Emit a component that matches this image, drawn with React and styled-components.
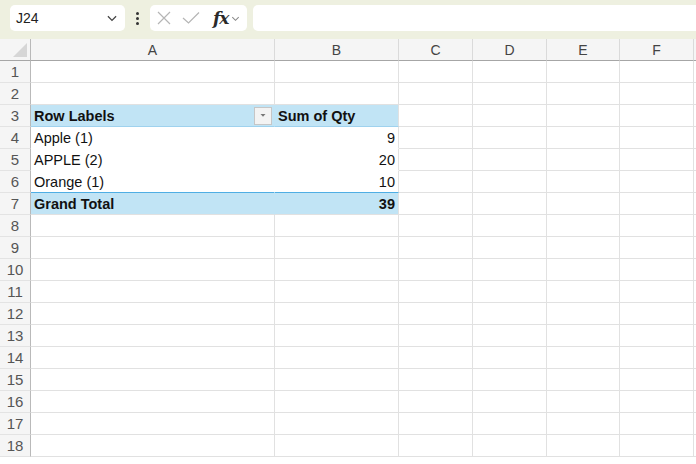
import React from "react";
import styled, { createGlobalStyle } from "styled-components";

const Global = createGlobalStyle`
  html, body { margin: 0; padding: 0; background: #ffffff; }
  body { font-family: "Liberation Sans", Arial, sans-serif; overflow: hidden; }
`;

const Page = styled.div`
  width: 696px;
  height: 464px;
  display: flex;
  flex-direction: column;
  overflow: hidden;
`;

const Toolbar = styled.div`
  height: 39px;
  flex: none;
  box-sizing: border-box;
  background: #eef0e0;
  display: flex;
  align-items: flex-start;
  padding: 5px 0 0 10px;
`;

const NameBox = styled.div`
  width: 115px;
  height: 26px;
  box-sizing: border-box;
  background: #ffffff;
  border-radius: 5px;
  display: flex;
  align-items: center;
  justify-content: space-between;
  padding: 0 6px 0 6px;
  font-size: 14px;
  color: #222;
`;

const Dots = styled.div`
  width: 25px;
  height: 26px;
  display: flex;
  flex-direction: column;
  align-items: center;
  justify-content: center;
  gap: 2px;
  span {
    width: 3px;
    height: 3px;
    background: #333;
    border-radius: 50%;
  }
`;

const FxBox = styled.div`
  width: 97px;
  height: 26px;
  box-sizing: border-box;
  background: #ffffff;
  border-radius: 5px;
  display: flex;
  align-items: center;
  padding: 0 0 0 5px;
  gap: 8px;
`;

const FxGroup = styled.span`
  display: flex;
  align-items: center;
  gap: 2px;
  margin-left: 4px;
`;

const Fx = styled.span`
  font-family: "DejaVu Serif", "Liberation Serif", serif;
  font-style: italic;
  font-size: 17px;
  font-weight: 600;
  color: #2a2a2a;
  letter-spacing: -1px;
`;

const FormulaInput = styled.div`
  flex: 1;
  height: 26px;
  margin-left: 6px;
  background: #ffffff;
  border-radius: 5px 0 0 5px;
`;

const Grid = styled.div`
  display: grid;
  grid-template-columns: 31px 244px 124px 74px 74px 73px 74px 1fr;
  grid-auto-rows: 22px;
`;

const Corner = styled.div`
  background: #f5f5f5;
  border-right: 1px solid #b9b9b9;
  border-bottom: 1px solid #a6a6a6;
  display: flex;
  align-items: flex-end;
  justify-content: flex-end;
  padding: 0 3px 3px 0;
  box-sizing: border-box;
`;

const ColHeader = styled.div`
  background: #f5f5f5;
  border-right: 1px solid #dadada;
  border-bottom: 1px solid #a6a6a6;
  box-sizing: border-box;
  display: flex;
  align-items: center;
  justify-content: center;
  font-size: 14px;
  color: #444;
`;

const RowHeader = styled.div`
  background: #f5f5f5;
  border-right: 1px solid #b9b9b9;
  border-bottom: 1px solid #e3e3e3;
  box-sizing: border-box;
  display: flex;
  align-items: center;
  justify-content: center;
  font-size: 15px;
  color: #555;
`;

const Cell = styled.div`
  box-sizing: border-box;
  background: ${(p) => p.$fill || "#ffffff"};
  border-right: 1px solid ${(p) => p.$rightColor || "#e1e1e1"};
  border-bottom: 1px solid ${(p) => p.$bottomColor || "#e1e1e1"};
  display: flex;
  align-items: center;
  justify-content: ${(p) => (p.$right ? "flex-end" : "space-between")};
  padding: 0 3px;
  font-size: 14.5px;
  font-weight: ${(p) => (p.$bold ? 700 : 400)};
  color: #111;
  white-space: nowrap;
`;

const FilterButton = styled.div`
  width: 18px;
  height: 18px;
  box-sizing: border-box;
  background: #f3f3f3;
  border: 1px solid #c6c6c6;
  display: flex;
  align-items: center;
  justify-content: center;
  margin-right: -1px;
`;

const cols = ["A", "B", "C", "D", "E", "F"];
const BLUE = "#c1e4f5";

const pivot = {
  3: { a: "Row Labels", b: "Sum of Qty", type: "head" },
  4: { a: "Apple (1)", b: "9", type: "body" },
  5: { a: "APPLE (2)", b: "20", type: "body" },
  6: { a: "Orange (1)", b: "10", type: "last" },
  7: { a: "Grand Total", b: "39", type: "total" },
};

function Chevron({ size = 12, color = "#444" }) {
  return (
    <svg width={size} height={size} viewBox="0 0 12 12">
      <path d="M2.5 4.5 L6 8 L9.5 4.5" fill="none" stroke={color} strokeWidth="1.1" />
    </svg>
  );
}

function PivotCells({ row }) {
  const p = pivot[row];
  const isBlue = p.type === "head" || p.type === "total";
  const fill = isBlue ? BLUE : "#ffffff";
  let bottom = "#ffffff";
  if (p.type === "head") bottom = "#9fd2ee";
  if (p.type === "last") bottom = "#4faee4";
  if (p.type === "total") bottom = "#e1e1e1";
  return (
    <>
      <Cell $fill={fill} $bold={isBlue} $rightColor={fill} $bottomColor={bottom}>
        <span>{p.a}</span>
        {p.type === "head" && (
          <FilterButton>
            <svg width="8" height="5" viewBox="0 0 8 5">
              <polygon points="1.5,1 6.5,1 4,3.8" fill="#777" />
            </svg>
          </FilterButton>
        )}
      </Cell>
      <Cell $fill={fill} $bold={isBlue} $right={p.type !== "head"} $bottomColor={bottom}>
        <span>{p.b}</span>
      </Cell>
    </>
  );
}

export default function App() {
  const rows = Array.from({ length: 18 }, (_, i) => i + 1);
  return (
    <Page>
      <Global />
      <Toolbar>
        <NameBox>
          <span>J24</span>
          <Chevron size={14} color="#444" />
        </NameBox>
        <Dots>
          <span />
          <span />
          <span />
        </Dots>
        <FxBox>
          <svg width="18" height="18" viewBox="0 0 18 18">
            <path d="M3 3 L15 15 M15 3 L3 15" stroke="#b5b5b5" strokeWidth="1.2" fill="none" />
          </svg>
          <svg width="20" height="18" viewBox="0 0 20 18">
            <path d="M2 9 L7.5 14 L18 3.5" stroke="#b5b5b5" strokeWidth="1.2" fill="none" />
          </svg>
          <FxGroup>
            <Fx>fx</Fx>
            <Chevron size={11} color="#888" />
          </FxGroup>
        </FxBox>
        <FormulaInput />
      </Toolbar>
      <Grid>
        <Corner>
          <svg width="14" height="14" viewBox="0 0 14 14">
            <polygon points="14,0 14,14 0,14" fill="#d6d6d6" />
          </svg>
        </Corner>
        {cols.map((c) => (
          <ColHeader key={c}>{c}</ColHeader>
        ))}
        <ColHeader />
        {rows.map((r) => (
          <React.Fragment key={r}>
            <RowHeader>{r}</RowHeader>
            {pivot[r] ? (
              <PivotCells row={r} />
            ) : (
              <>
                <Cell />
                <Cell />
              </>
            )}
            <Cell />
            <Cell />
            <Cell />
            <Cell />
            <Cell />
          </React.Fragment>
        ))}
      </Grid>
    </Page>
  );
}
